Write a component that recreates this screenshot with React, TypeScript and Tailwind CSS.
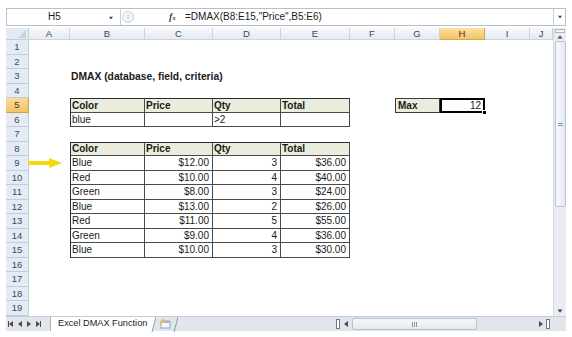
import React from "react";

const COLS = "grid grid-cols-[23px_41px_75px_68px_68px_69px_45px_45px_45px_45px_23px]";
const LETTERS = ["A", "B", "C", "D", "E", "F", "G", "H", "I", "J"];

type Row = {
  b?: string; c?: string; d?: string; e?: string;
};

const data: Row[] = [
  { b: "Blue", c: "$12.00", d: "3", e: "$36.00" },
  { b: "Red", c: "$10.00", d: "4", e: "$40.00" },
  { b: "Green", c: "$8.00", d: "3", e: "$24.00" },
  { b: "Blue", c: "$13.00", d: "2", e: "$26.00" },
  { b: "Red", c: "$11.00", d: "5", e: "$55.00" },
  { b: "Green", c: "$9.00", d: "4", e: "$36.00" },
  { b: "Blue", c: "$10.00", d: "3", e: "$30.00" },
];

function RowHead({ n, sel }: { n: number; sel?: boolean }) {
  return (
    <div
      className={
        "flex items-center justify-center overflow-hidden border-r border-b text-[9.5px] leading-none " +
        (sel
          ? "bg-gradient-to-b from-[#f9dc94] to-[#f3c466] border-[#c9a24e] text-[#3a3a3a]"
          : "bg-[#e4ebf4] border-[#c3ccd9] text-[#3b4a60]")
      }
    >
      {n}
    </div>
  );
}

function Empty() {
  return <div />;
}

function TC({
  children,
  right,
  head,
  first,
  top,
}: {
  children?: React.ReactNode;
  right?: boolean;
  head?: boolean;
  first?: boolean;
  top?: boolean;
}) {
  return (
    <div
      className={
        "flex items-center overflow-hidden whitespace-nowrap border-r border-b border-[#4a4a4a] text-[10px] leading-none " +
        (first ? "border-l border-l-[#2a2a2a] " : "") +
        (top ? "border-t border-t-[#2a2a2a] " : "") +
        (right ? "justify-end pr-[3px] " : "pl-[1px] ") +
        (head ? "bg-[#eaeddc] font-bold text-[#1a1a1a]" : "bg-white text-[#1a1a1a]")
      }
    >
      {children}
    </div>
  );
}

function rowH(n: number) {
  return n % 2 === 1 ? "h-[15px] grid-rows-[15px]" : "h-[14px] grid-rows-[14px]";
}

function EmptyRow({ n }: { n: number }) {
  return (
    <div className={COLS + " " + rowH(n)}>
      <RowHead n={n} />
      {LETTERS.map((l) => (
        <Empty key={l} />
      ))}
    </div>
  );
}

function Tri({ dir, cls }: { dir: "l" | "r" | "u" | "d"; cls?: string }) {
  const pts =
    dir === "l" ? "4,0 4,6 0,3" : dir === "r" ? "0,0 0,6 4,3" : dir === "u" ? "0,4 6,4 3,0" : "0,0 6,0 3,4";
  const w = dir === "l" || dir === "r" ? 4 : 6;
  const h = dir === "l" || dir === "r" ? 6 : 4;
  return (
    <svg width={w} height={h} viewBox={`0 0 ${w} ${h}`} className={cls}>
      <polygon points={pts} fill="#4a4a4a" />
    </svg>
  );
}

export default function App() {
  return (
    <div className="w-[572px] h-[337px] bg-white font-['Liberation_Sans',Arial,sans-serif] leading-none text-[#1a1a1a] overflow-hidden">
      <div className="h-[8px]" />
      {/* Formula bar */}
      <div className="ml-[6px] w-[560px] h-[18px] border border-[#b4c0ce] bg-white flex items-center">
        <div className="w-[114px] h-full border-r border-[#c6cfda] flex items-center">
          <div className="flex-1 text-center text-[10px] pr-[6px]">H5</div>
          <Tri dir="d" cls="mr-[6px] mt-[1px] scale-75" />
        </div>
        <div className="w-[64px] h-full flex items-center relative">
          <div className="ml-[1px] w-[12px] h-[12px] rounded-full border border-[#c9d2dd] bg-[#f4f6f9] flex items-center justify-center text-[6px] text-[#b0b8c4]">
            ≡
          </div>
          <span className="absolute left-[48px] top-[3px] text-[10px] italic font-bold font-['Liberation_Serif',serif] text-[#444]">
            f<span className="text-[7px]">x</span>
          </span>
        </div>
        <div className="flex-1 text-[10px] whitespace-nowrap">=DMAX(B8:E15,"Price",B5:E6)</div>
        <div className="w-[12px] h-full border-l border-[#c6cfda] flex items-center justify-center">
          <Tri dir="d" cls="scale-75" />
        </div>
      </div>
      <div className="h-[2px]" />
      {/* Sheet + vertical scrollbar */}
      <div className="ml-[6px] flex">
        <div className="w-[547px] relative">
          {/* Column headers */}
          <div className={COLS + " h-[12px] grid-rows-[12px]"}>
            <div className="bg-[#e4ebf4] border-r border-b border-[#c3ccd9] relative">
              <svg width="8" height="8" className="absolute right-[2px] bottom-[1px]">
                <polygon points="8,0 8,8 0,8" fill="#c9d0da" />
              </svg>
            </div>
            {LETTERS.map((l) => (
              <div
                key={l}
                className={
                  "flex items-center justify-center border-r border-b text-[9.5px] " +
                  (l === "H"
                    ? "bg-gradient-to-b from-[#fbe1a0] to-[#f3c466] border-[#d1a956] text-[#333]"
                    : "bg-gradient-to-b from-[#f6f8fb] to-[#e6ebf1] border-[#cdd5df] text-[#3d4552]")
                }
              >
                {l}
              </div>
            ))}
          </div>

          <EmptyRow n={1} />
          <EmptyRow n={2} />
          {/* Row 3 */}
          <div className={COLS + " " + rowH(3)}>
            <RowHead n={3} />
            <Empty />
            <div className="relative">
              <span className="absolute left-[1px] top-[3px] whitespace-nowrap text-[10.3px] font-bold text-[#1a1a1a]">
                DMAX (database, field, criteria)
              </span>
            </div>
            {LETTERS.slice(2).map((l) => (
              <Empty key={l} />
            ))}
          </div>
          <EmptyRow n={4} />
          {/* Row 5 */}
          <div className={COLS + " " + rowH(5)}>
            <RowHead n={5} sel />
            <Empty />
            <TC head first top>Color</TC>
            <TC head top>Price</TC>
            <TC head top>Qty</TC>
            <TC head top>Total</TC>
            <Empty />
            <div className="flex items-center pl-[2px] bg-[#eaeddc] border border-[#3a3a3a] text-[10px] font-bold">
              Max
            </div>
            <div className="relative flex items-center justify-end pr-[2px] bg-white border-2 border-black text-[10px]">
              12
              <div className="absolute right-[-4px] bottom-[-4px] w-[5px] h-[5px] bg-black border border-white" />
            </div>
            <Empty />
            <Empty />
          </div>
          {/* Row 6 */}
          <div className={COLS + " " + rowH(6)}>
            <RowHead n={6} />
            <Empty />
            <TC first>blue</TC>
            <TC></TC>
            <TC>&gt;2</TC>
            <TC></TC>
            {LETTERS.slice(5).map((l) => (
              <Empty key={l} />
            ))}
          </div>
          <EmptyRow n={7} />
          {/* Row 8 */}
          <div className={COLS + " " + rowH(8)}>
            <RowHead n={8} />
            <Empty />
            <TC head first top>Color</TC>
            <TC head top>Price</TC>
            <TC head top>Qty</TC>
            <TC head top>Total</TC>
            {LETTERS.slice(5).map((l) => (
              <Empty key={l} />
            ))}
          </div>
          {data.map((r, i) => {
            const n = 9 + i;
            return (
              <div key={n} className={COLS + " " + rowH(n)}>
                <RowHead n={n} />
                <Empty />
                <TC first>{r.b}</TC>
                <TC right>{r.c}</TC>
                <TC right>{r.d}</TC>
                <TC right>{r.e}</TC>
                {LETTERS.slice(5).map((l) => (
                  <Empty key={l} />
                ))}
              </div>
            );
          })}
          <EmptyRow n={16} />
          <EmptyRow n={17} />
          <EmptyRow n={18} />
          <EmptyRow n={19} />

          {/* Yellow arrow in A9 */}
          <svg width="36" height="10" viewBox="0 0 36 10" className="absolute left-[22px] top-[130px]">
            <rect x="0" y="3" width="23" height="4" fill="#f5d90a" />
            <polygon points="21,0 34,5 21,10" fill="#f5d90a" />
          </svg>
        </div>
        {/* Vertical scrollbar */}
        <div className="w-[13px] h-[288px] bg-[#e9edf2] border-l border-[#d3dae3] flex flex-col items-center">
          <div className="w-[10px] h-[4px] mt-[1px] border border-[#aeb8c5] bg-[#f4f6f9]" />
          <div className="h-[8px] flex items-center">
            <Tri dir="u" cls="scale-90" />
          </div>
          <div className="w-[11px] h-[166px] bg-gradient-to-r from-[#f7f9fb] to-[#e4e9ef] border border-[#b8c3d0] rounded-[2px] flex items-center justify-center">
            <div className="flex flex-col gap-[1px]">
              <div className="w-[5px] h-px bg-[#8d99a8]" />
              <div className="w-[5px] h-px bg-[#8d99a8]" />
            </div>
          </div>
          <div className="flex-1" />
          <div className="h-[8px] flex items-center mb-[1px]">
            <Tri dir="d" cls="scale-90" />
          </div>
        </div>
      </div>
      {/* Tab bar */}
      <div className="ml-[6px] w-[560px] h-[15px] flex items-stretch bg-[#e1e6ec] border-t border-[#c3ccd9]">
        <div className="w-[44px] flex items-center gap-[5px] pl-[2px]">
          <div className="flex items-center">
            <div className="w-px h-[6px] bg-[#4a4a4a]" />
            <Tri dir="l" />
          </div>
          <Tri dir="l" />
          <Tri dir="r" />
          <div className="flex items-center">
            <Tri dir="r" />
            <div className="w-px h-[6px] bg-[#4a4a4a]" />
          </div>
        </div>
        <div className="relative w-[102px] bg-white flex items-center pl-[7px] text-[9.2px] text-[#222] border-l border-[#aab5c3]">
          Excel DMAX Function
          <svg width="8" height="15" className="absolute right-[-4px] top-0">
            <polygon points="0,0 0,15 4,15 8,0" fill="white" />
            <line x1="8" y1="0" x2="4" y2="15" stroke="#8e9aab" strokeWidth="1" />
          </svg>
        </div>
        <div className="relative w-[30px] flex items-center pl-[8px]">
          <svg width="12" height="10" viewBox="0 0 12 10">
            <rect x="1" y="2" width="9" height="7" fill="#f4f7fb" stroke="#7f93ad" strokeWidth="0.8" />
            <rect x="1" y="2" width="9" height="2" fill="#9fb6d6" />
            <circle cx="3" cy="2" r="2" fill="#f2c23a" />
          </svg>
          <svg width="8" height="15" className="absolute right-[4px] top-0">
            <line x1="8" y1="0" x2="4" y2="15" stroke="#8e9aab" strokeWidth="1" />
          </svg>
        </div>
        <div className="w-[154px]" />
        {/* Horizontal scrollbar */}
        <div className="flex-1 flex items-center">
          <div className="w-[4px] h-[10px] border border-[#6d7885] bg-white" />
          <div className="w-[12px] flex justify-center">
            <Tri dir="l" />
          </div>
          <div className="w-[125px] h-[12px] bg-gradient-to-b from-[#f7f9fb] to-[#e4e9ef] border border-[#b8c3d0] rounded-[2px] flex items-center justify-center gap-[1px]">
            <div className="w-px h-[5px] bg-[#8d99a8]" />
            <div className="w-px h-[5px] bg-[#8d99a8]" />
            <div className="w-px h-[5px] bg-[#8d99a8]" />
          </div>
          <div className="flex-1" />
          <div className="w-[10px] flex justify-center">
            <Tri dir="r" />
          </div>
          <div className="w-[4px] h-[10px] border border-[#6d7885] bg-white mr-[3px]" />
        </div>
        <div className="w-[13px] bg-[#e1e6ec]" />
      </div>
    </div>
  );
}
